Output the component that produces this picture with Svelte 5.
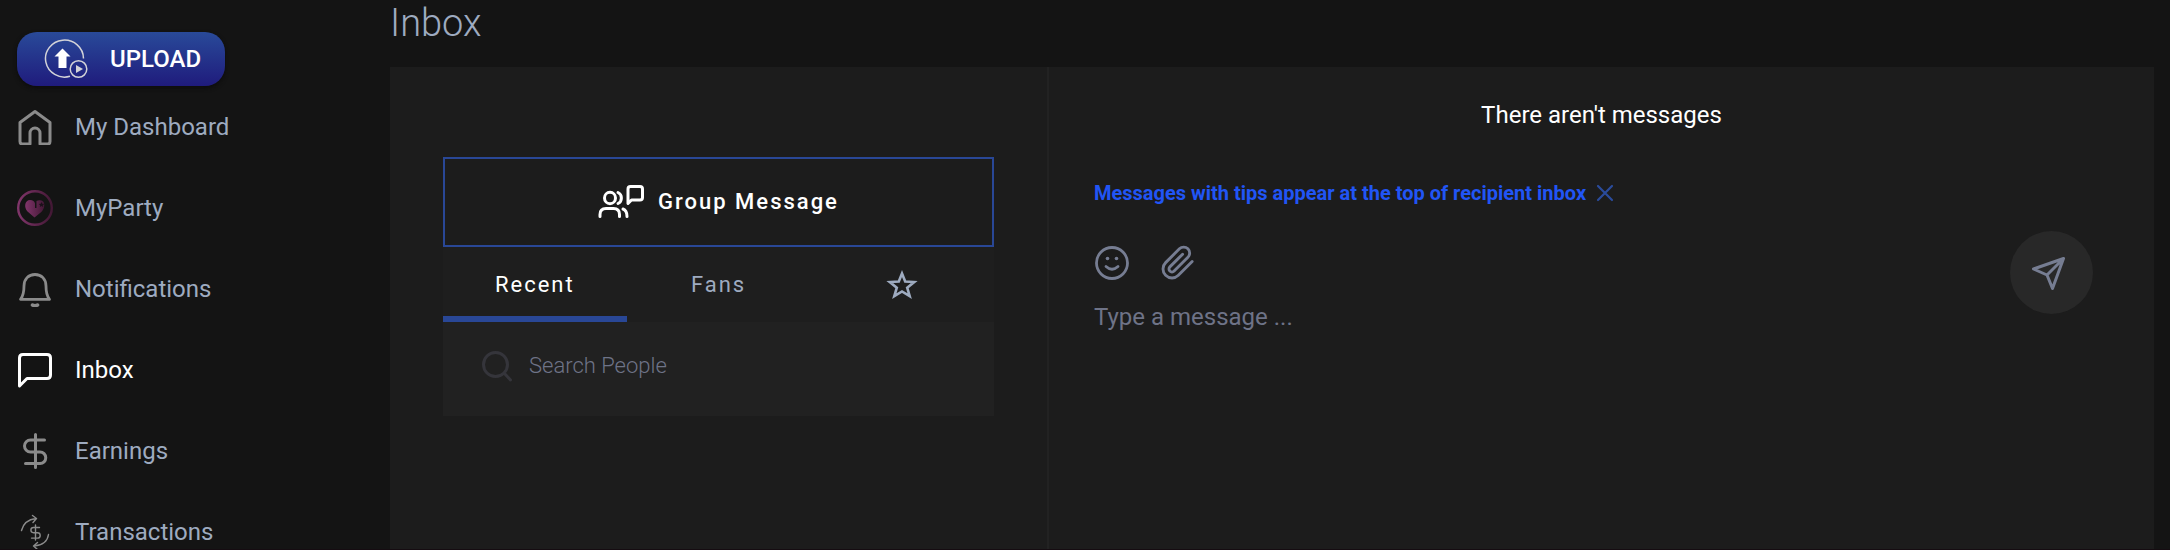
<script lang="ts">
  type NavItem = { label: string; icon: string }

  const nav: NavItem[] = [
    { label: "My Dashboard", icon: "home" },
    { label: "MyParty", icon: "party" },
    { label: "Notifications", icon: "bell" },
    { label: "Inbox", icon: "chat" },
    { label: "Earnings", icon: "dollar" },
    { label: "Transactions", icon: "transfer" },
  ];

  let current = $state("Inbox");
  let tab = $state("recent");
  let search = $state("");
  let message = $state("");
  let showTip = $state(true);
</script>

<div class="app">
  <aside>
    <button class="upload" type="button">
      <svg width="44" height="40" viewBox="0 0 44 40" fill="none" aria-hidden="true">
        <path d="M39.5 19.5A19 18.5 0 1 0 26 37.3" stroke="#d3d3d8" stroke-width="1.5" />
        <path d="M18.5 9.500 26.500 17.500H22.500V29H14.500V17.500H10.500Z" fill="#fff" />
        <circle cx="34.500" cy="30" r="8.300" stroke="#d3d3d8" stroke-width="1.500" />
        <path d="M32 26v8l7-4z" fill="#d3d3d8" />
      </svg>
      <span>UPLOAD</span>
    </button>

    <nav>
      {#each nav as item}
        <a
          href="#{item.icon}"
          class:active={current === item.label}
          aria-current={current === item.label ? "page" : undefined}
          onclick={() => (current = item.label)}
        >
          <svg width="36" height="36" viewBox="0 0 36 36" fill="none" stroke-width="3" stroke-linecap="round" stroke-linejoin="round" aria-hidden="true">
            {#if item.icon === "home"}
              <path d="M18 2.500 33 13.500V32.500Q33 35 30.500 35H23V24a5 5 0 0 0-10 0V35H5.500Q3 35 3 32.500V13.500Z" />
            {:else if item.icon === "party"}
              <defs>
                <linearGradient id="party" x1="0" x2="1">
                  <stop offset="0" stop-color="#80356a" />
                  <stop offset="1" stop-color="#431835" />
                </linearGradient>
              </defs>
              <circle cx="18" cy="18" r="16.800" stroke="url(#party)" stroke-width="2.400" />
              <g stroke="none">
                <path d="M17.500 27.500 10.500 21.500C6.500 17 8 10 13 10c3 0 4.500 1.500 5 3.500V18h1.500v-7C22 9.500 27.500 10 27.300 15c0 3-1.500 5.500-3 7Z" fill="url(#party)" />
                <path d="m24.500 12 .8 1.700 1.900.2-1.400 1.300.4 1.900-1.700-1-1.700 1 .4-1.900-1.400-1.300 1.900-.2Z" fill="#1b1119" />
              </g>
            {:else if item.icon === "bell"}
              <path d="M3.500 28.300c2.500-3 3.500-7 3.500-13.300 0-7 4.500-11.500 11-11.500S29 8 29 15c0 6.300 1 10.300 3.500 13.300Z" stroke-width="2.800" />
              <path d="M15.500 34q2.500 1.500 5 0" stroke-width="3.500" />
            {:else if item.icon === "chat"}
              <path d="M2.500 34V6Q2.500 2.500 6 2.500H30Q33.500 2.500 33.500 6V23Q33.500 26.500 30 26.500H10Z" />
            {:else if item.icon === "dollar"}
              <path d="M18.500 1.500v33M27.500 7H13.500a6 6 0 0 0 0 12H23a5.700 5.700 0 0 1 0 11.500H8.500" />
            {:else}
              <g stroke-width="1.400">
                <path d="M4.500 16.500Q7 6 19 4.500M15.500 1.500l4 3-3.500 4M31.500 20.500Q30 31 17 32M20.500 28.500l-4 3.500 4 3.500" />
                <path d="M18.500 11v15M22.500 13.500h-6a2.500 2.500 0 0 0 0 5.200h4a2.700 2.700 0 0 1 0 5.400h-6" />
              </g>
            {/if}
          </svg>
          <span>{item.label}</span>
        </a>
      {/each}
    </nav>
  </aside>

  <main>
    <h1>Inbox</h1>

    <div class="panel">
      <section class="people">
        <button class="group" type="button">
          <svg width="46" height="36" viewBox="0 0 46 36" fill="none" stroke="#fff" stroke-width="3" stroke-linecap="round" stroke-linejoin="round" aria-hidden="true">
            <ellipse cx="12" cy="14" rx="5.500" ry="5.700" />
            <path d="M2 32.500V30.500Q2 24.500 8 24.500H15.500Q21.500 24.500 21.500 30.500V32.500" />
            <path d="M20 8.500c4.500 2 4.500 9 0 11M25 25q4 1.500 4 7.500" />
            <path d="M30 19.500V5Q30 2.500 32.500 2.500H42Q44.500 2.500 44.500 5V13.500Q44.500 16 42 16H33.500Z" />
          </svg>
          <span>Group Message</span>
        </button>

        <div class="tabs" role="tablist">
          <button type="button" role="tab" aria-selected={tab === "recent"} onclick={() => (tab = "recent")}>Recent</button>
          <button type="button" role="tab" aria-selected={tab === "fans"} onclick={() => (tab = "fans")}>Fans</button>
          <button type="button" role="tab" aria-label="Favorites" aria-selected={tab === "favorites"} onclick={() => (tab = "favorites")}>
            <svg width="32" height="32" viewBox="0 0 32 32" fill="none" stroke="currentColor" stroke-width="2.600" aria-hidden="true">
              <path d="m16 4.500 3.200 8 9 .5-7 5.700 2.500 8.500L16 22.500l-7.700 4.700 2.500-8.500-7-5.700 9-.5Z" />
            </svg>
          </button>
        </div>

        <label class="search">
          <svg width="32" height="32" viewBox="0 0 32 32" fill="none" stroke="#35353b" stroke-width="3" stroke-linecap="round" aria-hidden="true">
            <circle cx="14.500" cy="14.500" r="12" />
            <path d="m23.500 23.500 6 6.500" />
          </svg>
          <input type="text" placeholder="Search People" aria-label="Search People" bind:value={search} />
        </label>
      </section>

      <section class="chat">
        <p class="empty">There aren't messages</p>

        {#if showTip}
          <div class="tip">
            <strong>Messages with tips appear at the top of recipient inbox</strong>
            <button type="button" aria-label="Dismiss" onclick={() => (showTip = false)}>
              <svg width="18" height="18" viewBox="0 0 18 18" stroke="#2a4b9b" stroke-width="2.200" stroke-linecap="round" aria-hidden="true">
                <path d="m2 2 14 14M16 2 2 16" />
              </svg>
            </button>
          </div>
        {/if}

        <form class="composer" onsubmit={(e) => e.preventDefault()}>
          <div class="fields">
            <div class="tools">
              <button type="button" aria-label="Emoji">
                <svg width="36" height="36" viewBox="0 0 36 36" fill="none" stroke="currentColor" stroke-width="2.800" stroke-linecap="round" aria-hidden="true">
                  <circle cx="18" cy="18" r="15.500" />
                  <path d="M12 21.500q6 5.500 12 0" />
                  <circle cx="13.500" cy="13.500" r="1.800" fill="currentColor" stroke="none" />
                  <circle cx="22.500" cy="13.500" r="1.800" fill="currentColor" stroke="none" />
                </svg>
              </button>
              <button type="button" aria-label="Attach file">
                <svg width="36" height="36" viewBox="0 0 24 24" fill="none" stroke="currentColor" stroke-width="1.900" stroke-linecap="round" stroke-linejoin="round" aria-hidden="true">
                  <path d="m21.440 11.050-9.190 9.190a6 6 0 0 1-8.490-8.490l9.190-9.190a4 4 0 0 1 5.660 5.660l-9.200 9.190a2 2 0 0 1-2.830-2.830l8.490-8.480" />
                </svg>
              </button>
            </div>
            <input type="text" placeholder="Type a message ..." aria-label="Message" bind:value={message} />
          </div>
          <button class="send" type="submit" aria-label="Send">
            <svg width="40" height="40" viewBox="0 0 40 40" fill="none" stroke="currentColor" stroke-width="3" stroke-linecap="round" stroke-linejoin="round" aria-hidden="true">
              <path d="M34.500 5.500 4.500 16 18 22 23.500 35.500ZM34.500 5.500 18 22" />
            </svg>
          </button>
        </form>
      </section>
    </div>
  </main>
</div>

<style>
  :global(body) {
    background: #141414;
  }

  .app {
    display: flex;
    box-sizing: border-box;
    height: 100vh;
    overflow: hidden;
    border-bottom: 1px solid #150c11;
    color: #9eabc0;
    font-family: Roboto, "Liberation Sans", sans-serif;
    font-size: 24px;
    line-height: 28px;
  }

  button,
  input {
    padding: 0;
    border: 0;
    outline: 0;
    background: none;
    color: inherit;
    font: inherit;
  }

  button {
    cursor: pointer;
  }

  svg {
    display: block;
    flex: none;
  }

  aside {
    flex: none;
    width: 373px;
    padding: 32px 0 0 17px;
  }

  .upload {
    display: flex;
    align-items: center;
    gap: 22px;
    width: 208px;
    height: 54px;
    padding-left: 27px;
    border-radius: 20px;
    background: linear-gradient(#294a99, #1f1b7c);
    box-shadow: 0 2px 4px #0c0c0c;
    color: #fff;
    font-weight: 500;
  }

  nav a {
    display: flex;
    align-items: center;
    gap: 22px;
    height: 81px;
    color: inherit;
    text-decoration: none;
  }

  nav svg {
    stroke: #8b8b8b;
  }

  nav .active {
    color: #fff;
  }

  nav .active svg {
    stroke: #fff;
  }

  main {
    display: flex;
    flex: 1;
    flex-direction: column;
    padding-right: 16px;
  }

  h1 {
    margin: 0;
    padding-bottom: 21px;
    font-size: 38px;
    font-weight: 300;
    line-height: 46px;
  }

  .panel {
    display: flex;
    flex: 1;
    background: #1c1c1c;
  }

  .people {
    box-sizing: border-box;
    flex: none;
    width: 659px;
    padding: 90px 53px 0;
    border-right: 2px solid #222;
    font-size: 22px;
  }

  .group {
    display: flex;
    align-items: center;
    justify-content: center;
    gap: 14px;
    width: 100%;
    height: 90px;
    border: 2px solid #294796;
    color: #fff;
    font-weight: 500;
    letter-spacing: 2px;
  }

  .tabs {
    display: flex;
    background: #1e1e1e;
  }

  .tabs button {
    display: flex;
    flex: 1;
    align-items: center;
    justify-content: center;
    box-sizing: border-box;
    height: 75px;
    padding-top: 6px;
    border-bottom: 6px solid transparent;
    letter-spacing: 2px;
  }

  .tabs button[aria-selected="true"] {
    border-color: #294796;
    color: #fff;
  }

  .search {
    display: flex;
    align-items: center;
    gap: 16px;
    height: 94px;
    padding: 0 38px 6px;
    box-sizing: border-box;
    background: #212121;
    font-weight: 300;
  }

  .search input {
    flex: 1;
    min-width: 0;
  }

  input::placeholder {
    color: #6e7387;
    opacity: 1;
  }

  .chat {
    flex: 1;
    padding: 34px 45px 0;
  }

  .empty {
    margin: 0;
    color: #fff;
    text-align: center;
  }

  .tip {
    display: flex;
    align-items: center;
    gap: 10px;
    padding: 50px 0 24px;
    color: #2155f5;
    font-size: 20px;
  }

  .tip strong {
    font-weight: 700;
  }

  .composer {
    display: flex;
    align-items: flex-start;
    padding-right: 16px;
    color: #767d92;
  }

  .fields {
    flex: 1;
    padding-top: 14px;
  }

  .tools {
    display: flex;
    gap: 30px;
    padding-bottom: 20px;
  }

  .fields input {
    display: block;
    width: 100%;
    height: 32px;
  }

  .send {
    display: flex;
    align-items: center;
    justify-content: center;
    width: 83px;
    height: 83px;
    padding-right: 6px;
    box-sizing: border-box;
    border-radius: 50%;
    background: #282828;
  }
</style>
